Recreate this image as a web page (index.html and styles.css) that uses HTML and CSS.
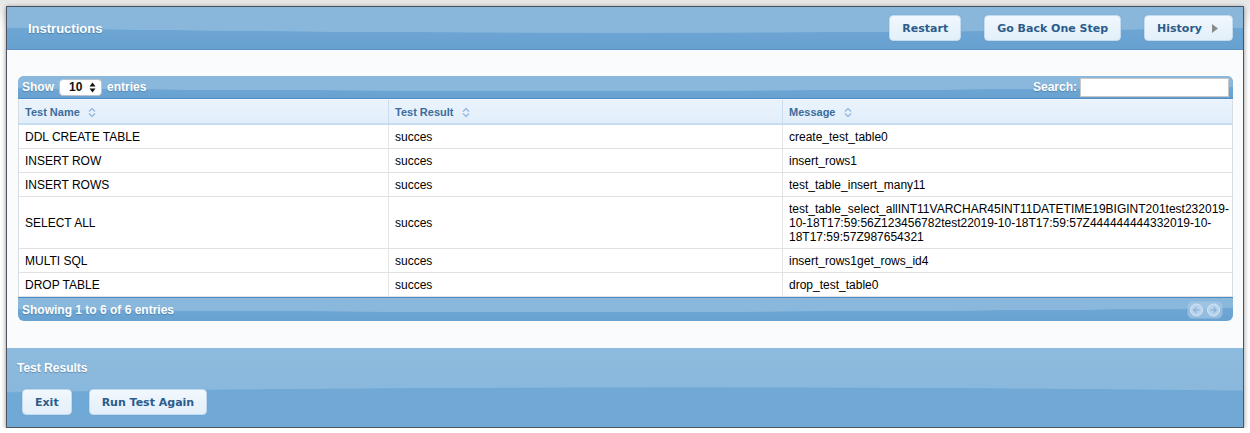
FILE: index.html
```html
<!DOCTYPE html>
<html>
<head>
<meta charset="utf-8">
<link rel="stylesheet" href="styles.css">
</head>
<body>
<div class="window">
  <header class="topbar">
    <h1 class="bar-title">Instructions</h1>
    <div class="actions">
      <button class="btn">Restart</button>
      <button class="btn">Go Back One Step</button>
      <button class="btn btn-history">History <svg class="tri" width="6" height="9" viewBox="0 0 6 9"><path d="M0 0 L6 4.5 L0 9 Z" fill="#8a8a8a"/></svg></button>
    </div>
  </header>
  <main class="content">
    <div class="dt">
      <div class="dt-toolbar">
        <div class="dt-length">Show
          <span class="select"><b>10</b><svg width="7" height="11" viewBox="0 0 7 11"><path d="M0.5 4.5 L3.5 0.5 L6.5 4.5 Z M0.5 6.5 L3.5 10.5 L6.5 6.5 Z" fill="#111"/></svg></span>
          entries</div>
        <div class="dt-search">Search: <span class="input"></span></div>
      </div>
      <table class="grid">
        <colgroup><col class="c1"><col class="c2"><col class="c3"></colgroup>
        <thead>
          <tr>
            <th>Test Name <svg class="sort" width="8" height="11" viewBox="0 0 8 11"><path d="M1 4.5 L4 1.5 L7 4.5 M1 6.5 L4 9.5 L7 6.5" fill="none" stroke="#8db4dc" stroke-width="1.2"/></svg></th>
            <th>Test Result <svg class="sort" width="8" height="11" viewBox="0 0 8 11"><path d="M1 4.5 L4 1.5 L7 4.5 M1 6.5 L4 9.5 L7 6.5" fill="none" stroke="#8db4dc" stroke-width="1.2"/></svg></th>
            <th>Message <svg class="sort" width="8" height="11" viewBox="0 0 8 11"><path d="M1 4.5 L4 1.5 L7 4.5 M1 6.5 L4 9.5 L7 6.5" fill="none" stroke="#8db4dc" stroke-width="1.2"/></svg></th>
          </tr>
        </thead>
        <tbody>
          <tr><td>DDL CREATE TABLE</td><td>succes</td><td>create_test_table0</td></tr>
          <tr><td>INSERT ROW</td><td>succes</td><td>insert_rows1</td></tr>
          <tr><td>INSERT ROWS</td><td>succes</td><td>test_table_insert_many11</td></tr>
          <tr><td>SELECT ALL</td><td>succes</td><td>test_table_select_allINT11VARCHAR45INT11DATETIME19BIGINT201test232019-10-18T17:59:56Z123456782test22019-10-18T17:59:57Z444444444332019-10-18T17:59:57Z987654321</td></tr>
          <tr><td>MULTI SQL</td><td>succes</td><td>insert_rows1get_rows_id4</td></tr>
          <tr><td>DROP TABLE</td><td>succes</td><td>drop_test_table0</td></tr>
        </tbody>
      </table>
      <div class="dt-footer">
        <div class="dt-info">Showing 1 to 6 of 6 entries</div>
        <div class="pager">
          <svg width="36" height="18" viewBox="0 0 36 18">
            <rect x="0.5" y="0.5" width="35" height="17" rx="5" fill="#a6c8e6" opacity="0.7"/>
            <circle cx="9.5" cy="9" r="6" fill="#b9d4ec" stroke="#d6e6f4"/>
            <path d="M12.5 9 H7 M9.5 6.3 L6.8 9 L9.5 11.7" fill="none" stroke="#8fb6da" stroke-width="1.5"/>
            <circle cx="26.5" cy="9" r="6" fill="#b9d4ec" stroke="#d6e6f4"/>
            <path d="M23.5 9 H29 M26.5 6.3 L29.2 9 L26.5 11.7" fill="none" stroke="#8fb6da" stroke-width="1.5"/>
          </svg>
        </div>
      </div>
    </div>
  </main>
  <footer class="bottombar">
    <h2 class="bar-title small">Test Results</h2>
    <div class="actions left">
      <button class="btn">Exit</button>
      <button class="btn">Run Test Again</button>
    </div>
  </footer>
</div>
</body>
</html>
```

FILE: styles.css
```css
html, body {
  margin: 0;
  padding: 0;
  background: #ffffff;
}
body {
  padding: 6px 6px 0 6px;
  background: linear-gradient(#e6e6e6, #ffffff 30px);
  font-family: "Liberation Sans", Arial, sans-serif;
}
.window {
  width: 1236px;
  border: 1px solid #4d535a;
  box-shadow: 0 1px 5px rgba(0,0,0,0.45);
  display: flex;
  flex-direction: column;
  background: #f9fbfc;
}
.topbar {
  flex-shrink: 0;
  height: 42px;
  border-bottom: 1px solid #5b93c6;
  display: flex;
  align-items: center;
  justify-content: space-between;
  padding: 0 10px 0 21px;
  background:
    radial-gradient(ellipse 86% 26px at 50% 0, #88b7db 98%, rgba(136,183,219,0) 100%),
    linear-gradient(#74abd7, #67a1d0);
}
.bar-title {
  margin: 1px 0 0;
  font-size: 13px;
  font-weight: bold;
  color: #ffffff;
  text-shadow: 0 1px 1px rgba(40,80,120,0.45);
}
.actions {
  display: flex;
  gap: 23px;
  align-items: center;
}
.btn {
  height: 26px;
  padding: 0 12px;
  border: 1px solid #c3dbf0;
  border-radius: 4px;
  background: linear-gradient(#f1f7fd, #e3eff9);
  color: #2b5c8c;
  font-family: "DejaVu Sans", sans-serif;
  font-size: 11px;
  font-weight: bold;
  box-shadow: 0 0 1px rgba(60,110,160,0.4);
  display: flex;
  align-items: center;
  gap: 10px;
}
.btn-history { padding-right: 14px; }
.content {
  flex-shrink: 0;
  padding: 26px 10px 27px 11px;
  background: #f9fbfc;
}
.dt {
  display: flex;
  flex-direction: column;
}
.dt-toolbar {
  height: 22px;
  border-radius: 6px 6px 0 0;
  border-bottom: 1px solid #4f8cc4;
  display: flex;
  align-items: center;
  justify-content: space-between;
  padding: 0 4px;
  color: #fff;
  font-size: 12px;
  font-weight: bold;
  text-shadow: 0 1px 1px rgba(40,80,120,0.4);
  background:
    radial-gradient(ellipse 80% 15px at 45% 0, #8ab8dc 98%, rgba(138,184,220,0) 100%),
    linear-gradient(#74abd7, #68a2d1);
}
.dt-length { display: flex; align-items: center; gap: 5px; }
.select {
  width: 43px;
  height: 17px;
  box-sizing: border-box;
  background: #fff;
  border-radius: 4px;
  border: 1px solid #b8c4cf;
  display: inline-flex;
  align-items: center;
  justify-content: space-between;
  padding: 0 5px 0 9px;
  color: #111;
  text-shadow: none;
}
.select b { font-size: 12px; }
.dt-search { display: flex; align-items: center; gap: 3px; }
.input {
  display: inline-block;
  width: 149px;
  height: 19px;
  box-sizing: border-box;
  background: #fff;
  border: 1px solid #c8c8c8;
}
.grid {
  border-collapse: collapse;
  width: 100%;
  table-layout: fixed;
  background: #fff;
  font-size: 12px;
  border-left: 1px solid #d7dde3;
  border-right: 1px solid #d7dde3;
}
.c1 { width: 370px; }
.c2 { width: 394px; }
.grid th {
  height: 23px;
  padding: 0 6px;
  text-align: left;
  font-size: 11px;
  font-weight: bold;
  color: #3c6c9c;
  background: linear-gradient(#eaf3fc, #e1eefa);
  border-top: 1px solid #f3f8fd;
  border-bottom: 2px solid #c6dcf0;
  border-left: 1px solid #cbdcee;
  vertical-align: middle;
}
.grid th:first-child { border-left: none; }
.sort { vertical-align: -2px; margin-left: 5px; }
.grid td {
  padding: 5px 6px 4px;
  line-height: 14px;
  color: #000;
  border-bottom: 1px solid #e1e1e1;
  border-left: 1px solid #e4e4e4;
  vertical-align: middle;
}
.grid td:first-child { border-left: none; }
.dt-footer {
  height: 23px;
  border-radius: 0 0 6px 6px;
  border-top: 1px solid #4f8cc4;
  display: flex;
  align-items: center;
  justify-content: space-between;
  padding: 0 10px 0 4px;
  color: #fff;
  font-size: 12px;
  font-weight: bold;
  text-shadow: 0 1px 1px rgba(40,80,120,0.4);
  background:
    radial-gradient(ellipse 80% 14px at 45% 0, #8ab8dc 98%, rgba(138,184,220,0) 100%),
    linear-gradient(#74abd7, #68a2d1);
}
.pager { display: flex; align-items: center; }
.pager svg { display: block; }
.bottombar {
  flex-shrink: 0;
  height: 79px;
  box-sizing: border-box;
  padding: 13px 0 12px 10px;
  display: flex;
  flex-direction: column;
  justify-content: space-between;
  background:
    radial-gradient(ellipse 115% 40px at 55% 100%, #70a9d6 98%, rgba(112,169,214,0) 100%),
    linear-gradient(#8dbbde, #88b6db);
}
.bar-title.small { font-size: 12px; margin: 0; }
.actions.left { gap: 17px; padding-left: 5px; }
```
